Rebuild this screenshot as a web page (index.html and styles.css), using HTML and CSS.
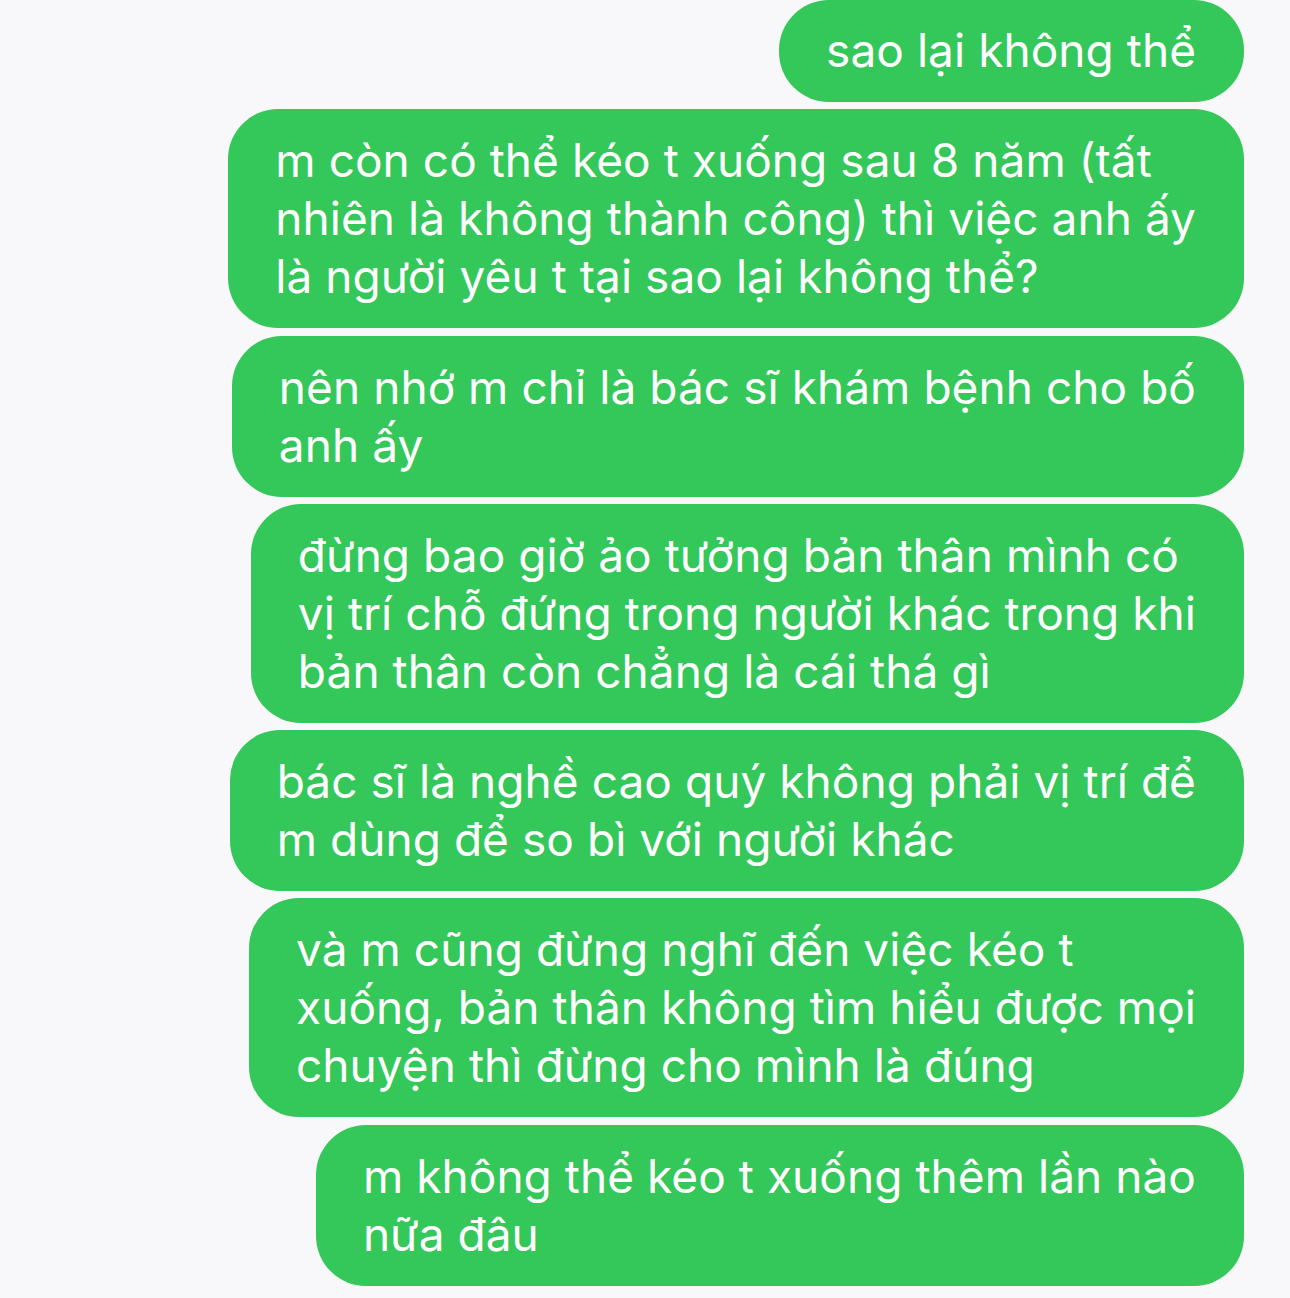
FILE: index.html
```html
<!DOCTYPE html>
<html lang="vi">
<head>
<meta charset="utf-8">
<title>Tin nhắn</title>
<link rel="stylesheet" href="styles.css">
</head>
<body>
<main class="thread">
  <div class="bubble b1">sao lại không thể</div>
  <div class="bubble b2">m còn có thể kéo t xuống sau 8 năm (tất<br>nhiên là không thành công) thì việc anh ấy<br>là người yêu t tại sao lại không thể?</div>
  <div class="bubble b3">nên nhớ m chỉ là bác sĩ khám bệnh cho bố<br>anh ấy</div>
  <div class="bubble b4">đừng bao giờ ảo tưởng bản thân mình có<br>vị trí chỗ đứng trong người khác trong khi<br>bản thân còn chẳng là cái thá gì</div>
  <div class="bubble b5">bác sĩ là nghề cao quý không phải vị trí để<br>m dùng để so bì với người khác</div>
  <div class="bubble b6">và m cũng đừng nghĩ đến việc kéo t<br>xuống, bản thân không tìm hiểu được mọi<br>chuyện thì đừng cho mình là đúng</div>
  <div class="bubble b7">m không thể kéo t xuống thêm lần nào<br>nữa đâu</div>
</main>
</body>
</html>
```

FILE: styles.css
```css
html, body {
  margin: 0;
  padding: 0;
  background: #f8f8fa;
}

body {
  width: 1290px;
  height: 1298px;
  overflow: hidden;
  font-family: Inter, "Noto Sans", "Liberation Sans", sans-serif;
}

.thread {
  display: flex;
  flex-direction: column;
  align-items: flex-end;
  gap: 7.3px;
  padding: 0 46px 0 0;
}

.bubble {
  background: #34c759;
  color: #ffffff;
  font-size: 46px;
  line-height: 58px;
  letter-spacing: 0.05px;
  padding: 22px 48px 23px 47px;
  border-radius: 50px;
  white-space: nowrap;
  box-sizing: border-box;
}

.b1 {
  padding-top: 21px;
}
```
